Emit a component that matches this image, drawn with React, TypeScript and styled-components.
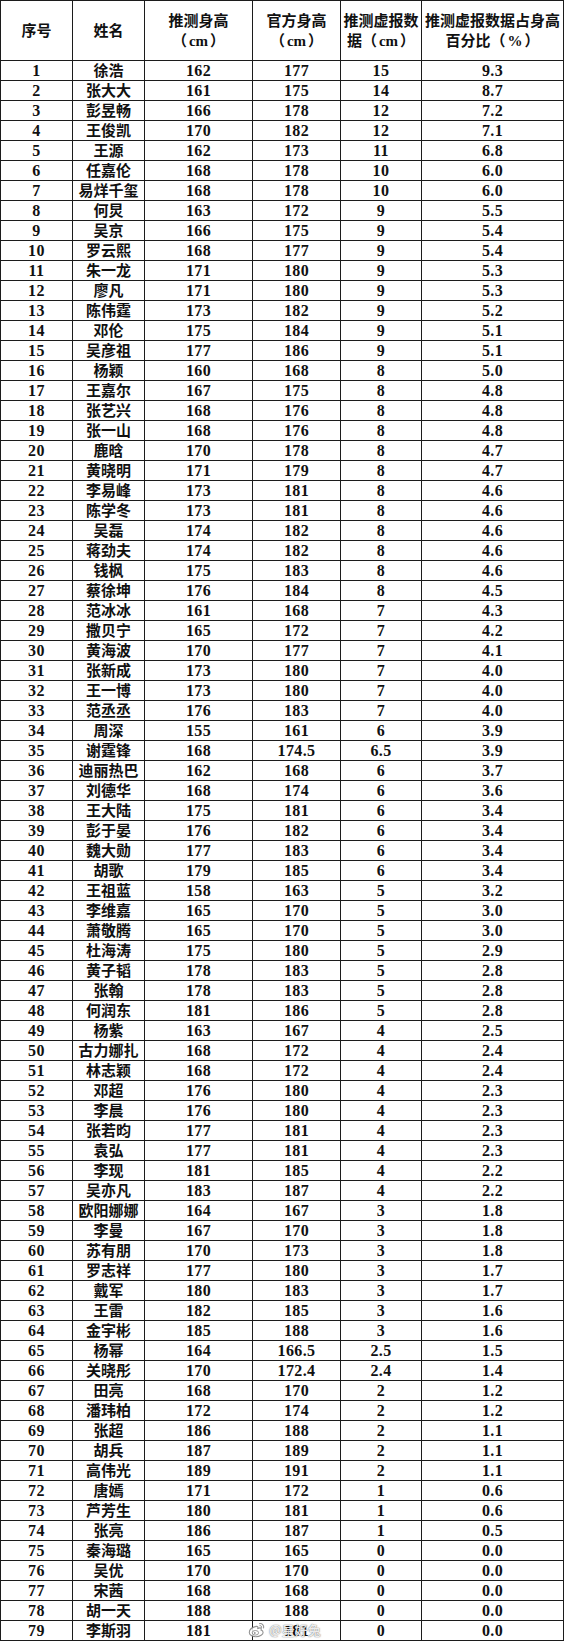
import React from "react";
import styled, { createGlobalStyle } from "styled-components";

const GlobalStyle = createGlobalStyle`
  html, body { margin: 0; padding: 0; background: #ffffff; }
  * { box-sizing: border-box; }
`;

const Page = styled.div`
  position: relative;
  width: 565px;
  background: #fff;
`;

const Table = styled.table`
  border-collapse: collapse;
  table-layout: fixed;
  width: 563px;
  color: #111;
  font-family: "Liberation Serif", "Noto Sans CJK SC", serif;
  font-weight: 700;
  text-spacing-trim: space-all;
`;

const HeadCell = styled.th`
  height: 60px;
  padding: 0;
  border: 1px solid #1c1c1c;
  font-size: 15px;
  line-height: 20px;
  font-weight: 700;
  text-align: center;
  vertical-align: middle;
  white-space: nowrap;
  text-spacing-trim: space-all;
`;

const Unit = styled.span`
  padding: 0 2px;
`;

const Cell = styled.td<{ $name?: boolean }>`
  height: 20px;
  padding: 0;
  border: 1px solid #1c1c1c;
  text-align: center;
  vertical-align: middle;
  white-space: nowrap;
  font-size: ${(p) => (p.$name ? "15px" : "16px")};
  letter-spacing: ${(p) => (p.$name ? "0" : "0.4px")};
  line-height: 18px;
`;

const Watermark = styled.div`
  position: absolute;
  left: 248px;
  top: 1622px;
  display: flex;
  align-items: center;
  gap: 3px;
  pointer-events: none;
`;

const WatermarkText = styled.span`
  font-family: "Noto Sans CJK SC", sans-serif;
  font-size: 13px;
  font-weight: 500;
  color: rgba(255, 255, 255, 0.9);
  text-shadow: 0 0 1px rgba(0, 0, 0, 0.55), 0 0 2px rgba(0, 0, 0, 0.25);
  line-height: 16px;
`;

type Row = [number, string, string, string, string, string];

const rows: Row[] = [
  [1, "徐浩", "162", "177", "15", "9.3"],
  [2, "张大大", "161", "175", "14", "8.7"],
  [3, "彭昱畅", "166", "178", "12", "7.2"],
  [4, "王俊凯", "170", "182", "12", "7.1"],
  [5, "王源", "162", "173", "11", "6.8"],
  [6, "任嘉伦", "168", "178", "10", "6.0"],
  [7, "易烊千玺", "168", "178", "10", "6.0"],
  [8, "何炅", "163", "172", "9", "5.5"],
  [9, "吴京", "166", "175", "9", "5.4"],
  [10, "罗云熙", "168", "177", "9", "5.4"],
  [11, "朱一龙", "171", "180", "9", "5.3"],
  [12, "廖凡", "171", "180", "9", "5.3"],
  [13, "陈伟霆", "173", "182", "9", "5.2"],
  [14, "邓伦", "175", "184", "9", "5.1"],
  [15, "吴彦祖", "177", "186", "9", "5.1"],
  [16, "杨颖", "160", "168", "8", "5.0"],
  [17, "王嘉尔", "167", "175", "8", "4.8"],
  [18, "张艺兴", "168", "176", "8", "4.8"],
  [19, "张一山", "168", "176", "8", "4.8"],
  [20, "鹿晗", "170", "178", "8", "4.7"],
  [21, "黄晓明", "171", "179", "8", "4.7"],
  [22, "李易峰", "173", "181", "8", "4.6"],
  [23, "陈学冬", "173", "181", "8", "4.6"],
  [24, "吴磊", "174", "182", "8", "4.6"],
  [25, "蒋劲夫", "174", "182", "8", "4.6"],
  [26, "钱枫", "175", "183", "8", "4.6"],
  [27, "蔡徐坤", "176", "184", "8", "4.5"],
  [28, "范冰冰", "161", "168", "7", "4.3"],
  [29, "撒贝宁", "165", "172", "7", "4.2"],
  [30, "黄海波", "170", "177", "7", "4.1"],
  [31, "张新成", "173", "180", "7", "4.0"],
  [32, "王一博", "173", "180", "7", "4.0"],
  [33, "范丞丞", "176", "183", "7", "4.0"],
  [34, "周深", "155", "161", "6", "3.9"],
  [35, "谢霆锋", "168", "174.5", "6.5", "3.9"],
  [36, "迪丽热巴", "162", "168", "6", "3.7"],
  [37, "刘德华", "168", "174", "6", "3.6"],
  [38, "王大陆", "175", "181", "6", "3.4"],
  [39, "彭于晏", "176", "182", "6", "3.4"],
  [40, "魏大勋", "177", "183", "6", "3.4"],
  [41, "胡歌", "179", "185", "6", "3.4"],
  [42, "王祖蓝", "158", "163", "5", "3.2"],
  [43, "李维嘉", "165", "170", "5", "3.0"],
  [44, "萧敬腾", "165", "170", "5", "3.0"],
  [45, "杜海涛", "175", "180", "5", "2.9"],
  [46, "黄子韬", "178", "183", "5", "2.8"],
  [47, "张翰", "178", "183", "5", "2.8"],
  [48, "何润东", "181", "186", "5", "2.8"],
  [49, "杨紫", "163", "167", "4", "2.5"],
  [50, "古力娜扎", "168", "172", "4", "2.4"],
  [51, "林志颖", "168", "172", "4", "2.4"],
  [52, "邓超", "176", "180", "4", "2.3"],
  [53, "李晨", "176", "180", "4", "2.3"],
  [54, "张若昀", "177", "181", "4", "2.3"],
  [55, "袁弘", "177", "181", "4", "2.3"],
  [56, "李现", "181", "185", "4", "2.2"],
  [57, "吴亦凡", "183", "187", "4", "2.2"],
  [58, "欧阳娜娜", "164", "167", "3", "1.8"],
  [59, "李曼", "167", "170", "3", "1.8"],
  [60, "苏有朋", "170", "173", "3", "1.8"],
  [61, "罗志祥", "177", "180", "3", "1.7"],
  [62, "戴军", "180", "183", "3", "1.7"],
  [63, "王雷", "182", "185", "3", "1.6"],
  [64, "金宇彬", "185", "188", "3", "1.6"],
  [65, "杨幂", "164", "166.5", "2.5", "1.5"],
  [66, "关晓彤", "170", "172.4", "2.4", "1.4"],
  [67, "田亮", "168", "170", "2", "1.2"],
  [68, "潘玮柏", "172", "174", "2", "1.2"],
  [69, "张超", "186", "188", "2", "1.1"],
  [70, "胡兵", "187", "189", "2", "1.1"],
  [71, "高伟光", "189", "191", "2", "1.1"],
  [72, "唐嫣", "171", "172", "1", "0.6"],
  [73, "芦芳生", "180", "181", "1", "0.6"],
  [74, "张亮", "186", "187", "1", "0.5"],
  [75, "秦海璐", "165", "165", "0", "0.0"],
  [76, "吴优", "170", "170", "0", "0.0"],
  [77, "宋茜", "168", "168", "0", "0.0"],
  [78, "胡一天", "188", "188", "0", "0.0"],
  [79, "李斯羽", "181", "181", "0", "0.0"],
];

const WeiboLogo = () => (
  <svg width="18" height="16" viewBox="0 0 18 16" fill="none">
    <path
      d="M7.2 4.6c-3 .9-5.9 3.3-5.9 5.8 0 2.5 3.1 4.3 6.6 4.3 4.3 0 7.2-2.4 7.2-4.3 0-1.3-1.2-2-2.1-2.3.5-1.2.4-2.4-1.3-2.2-.9.1-1.6.5-1.9.6.3-1 .5-2.7-2.6-1.9z"
      stroke="rgba(120,120,120,0.8)"
      strokeWidth="1.1"
      fill="rgba(255,255,255,0.85)"
    />
    <ellipse cx="7.4" cy="10.8" rx="3.2" ry="2.3" stroke="rgba(120,120,120,0.8)" strokeWidth="0.9" fill="none" />
    <circle cx="6.8" cy="11" r="0.9" fill="rgba(120,120,120,0.8)" />
    <path d="M11.6 1.6c2.4-.4 4.6 1.7 4 4.3" stroke="rgba(120,120,120,0.8)" strokeWidth="1.1" strokeLinecap="round" />
    <path d="M11.9 3.6c1.1-.2 2 .8 1.8 1.9" stroke="rgba(120,120,120,0.8)" strokeWidth="1" strokeLinecap="round" />
  </svg>
);

export default function App() {
  return (
    <Page>
      <GlobalStyle />
      <Table>
        <colgroup>
          <col style={{ width: 72 }} />
          <col style={{ width: 72 }} />
          <col style={{ width: 108 }} />
          <col style={{ width: 88 }} />
          <col style={{ width: 81 }} />
          <col style={{ width: 142 }} />
        </colgroup>
        <thead>
          <tr>
            <HeadCell>序号</HeadCell>
            <HeadCell>姓名</HeadCell>
            <HeadCell>
              推测身高
              <br />（<Unit>cm</Unit>）
            </HeadCell>
            <HeadCell>
              官方身高
              <br />（<Unit>cm</Unit>）
            </HeadCell>
            <HeadCell>
              推测虚报数
              <br />据（<Unit>cm</Unit>）
            </HeadCell>
            <HeadCell>
              推测虚报数据占身高
              <br />百分比（<Unit>%</Unit>）
            </HeadCell>
          </tr>
        </thead>
        <tbody>
          {rows.map((r) => (
            <tr key={r[0]}>
              <Cell>{r[0]}</Cell>
              <Cell $name>{r[1]}</Cell>
              <Cell>{r[2]}</Cell>
              <Cell>{r[3]}</Cell>
              <Cell>{r[4]}</Cell>
              <Cell>{r[5]}</Cell>
            </tr>
          ))}
        </tbody>
      </Table>
      <Watermark>
        <WeiboLogo />
        <WatermarkText>@星好兔</WatermarkText>
      </Watermark>
    </Page>
  );
}
